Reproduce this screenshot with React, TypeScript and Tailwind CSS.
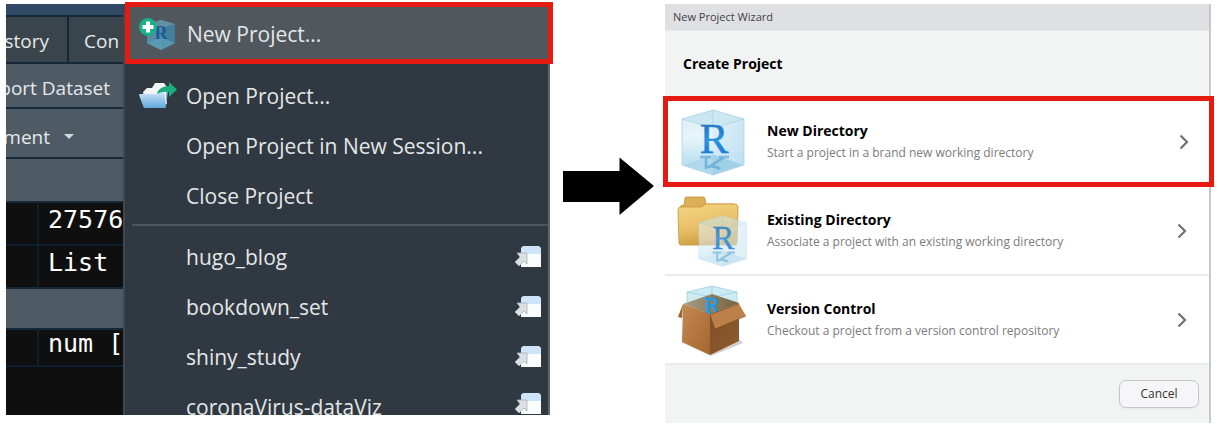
import type { ReactNode } from "react";

function Cube({ id }: { id: string }) {
  return (
    <g>
      <defs>
        <linearGradient id={`${id}-left`} x1="0" y1="0" x2="0" y2="1">
          <stop offset="0" stopColor="#cdeaf3" />
          <stop offset="0.5" stopColor="#e3f3f9" />
          <stop offset="1" stopColor="#aad8ed" />
        </linearGradient>
        <linearGradient id={`${id}-right`} x1="0" y1="0" x2="1" y2="1">
          <stop offset="0" stopColor="#e4f3fb" />
          <stop offset="1" stopColor="#bfdff1" />
        </linearGradient>
        <linearGradient id={`${id}-letter`} x1="0" y1="0" x2="0" y2="1">
          <stop offset="0" stopColor="#1b66b4" />
          <stop offset="0.55" stopColor="#2793e4" />
          <stop offset="1" stopColor="#0c6fd0" />
        </linearGradient>
      </defs>
      <path d="M1 10 32 1v44L1 56Z" fill={`url(#${id}-left)`} />
      <path d="M32 1l31 9v46L32 45Z" fill={`url(#${id}-right)`} />
      <path d="M1 56 32 45l31 11-31 10Z" fill="#9fd0e8" />
      <path d="M1 10 32 1l31 9-31 9Z" fill="#c5e6ef" fillOpacity="0.7" />
      <path d="M32 19v47L1 56V10Z" fill="#fff" fillOpacity="0.18" />
      <path d="M1 10 32 1l31 9v46L32 66 1 56ZM1 10l31 9 31-9M32 1v18" fill="none" stroke="#a9d3e2" strokeWidth="0.8" />
    </g>
  );
}

function Letter({ id }: { id: string }) {
  return (
    <>
      <text x="33" y="44" textAnchor="middle" fontSize="43" className="font-['Liberation_Serif',serif]" fill={`url(#${id}-letter)`} stroke={`url(#${id}-letter)`} strokeWidth="0.5">R</text>
      <path d="M19 48h11M38 48h10M25 48v12M29 57 43 48.500M26 58q8-2 13 2" fill="none" stroke="#4f9fd0" strokeWidth="2.6" opacity="0.6" />
    </>
  );
}

function NewDirectoryIcon() {
  return (
    <svg viewBox="0 0 64 67" className="h-[67px] w-[64px]" aria-hidden="true">
      <Cube id="nd" />
      <Letter id="nd" />
    </svg>
  );
}

function FolderIcon() {
  return (
    <svg viewBox="0 0 72 72" className="h-[72px] w-[72px]" aria-hidden="true">
      <defs>
        <linearGradient id="folder" x1="0" y1="0" x2="0.3" y2="1">
          <stop offset="0" stopColor="#f5d585" />
          <stop offset="0.6" stopColor="#e8c068" />
          <stop offset="1" stopColor="#cfa046" />
        </linearGradient>
      </defs>
      <path d="M7 9 8 2q0-1 2-1h16q2 0 2 2l1 5h28q3 0 3 3v8H3v-7q0-3 4-3Z" fill="#dcae55" stroke="#c1933e" strokeWidth="0.8" />
      <path d="M1 14q0-3 3-3h20l5-3h28q4 0 4 3l-1 36q0 2-2 2H4q-2 0-2-2Z" fill="url(#folder)" stroke="#c99b45" strokeWidth="0.9" />
      <g transform="translate(21 19) scale(.77 .78)" opacity="0.55">
        <Cube id="fd" />
      </g>
      <g transform="translate(21 19) scale(.77 .78)" opacity="0.85">
        <Letter id="fd" />
      </g>
    </svg>
  );
}

function BoxIcon() {
  return (
    <svg viewBox="0 0 70 72" className="h-[72px] w-[70px]" aria-hidden="true">
      <defs>
        <linearGradient id="box-left" x1="0" y1="0" x2="1" y2="1">
          <stop offset="0" stopColor="#c48a50" />
          <stop offset="1" stopColor="#a4662f" />
        </linearGradient>
        <linearGradient id="box-right" x1="0" y1="0" x2="1" y2="1">
          <stop offset="0" stopColor="#7f4f26" />
          <stop offset="1" stopColor="#8f5b2e" />
        </linearGradient>
        <linearGradient id="box-inside" x1="0" y1="0" x2="1" y2="0">
          <stop offset="0" stopColor="#a99e84" />
          <stop offset="1" stopColor="#75603f" />
        </linearGradient>
      </defs>
      <path d="M3 57l30 14 32-13-5-5Z" fill="#777" opacity="0.35" />
      <path d="M9 7 34 1l25 6v15L33 29 9 20Z" fill="#cdebf3" stroke="#9ed0df" strokeWidth="0.8" />
      <path d="M9 7l25 5 25-5M34 1v11" fill="none" stroke="#9ed0df" strokeWidth="0.8" />
      <path d="M5 19 34 9l27 9-29 11Z" fill="url(#box-inside)" />
      <text x="34" y="28" textAnchor="middle" fontSize="24" className="font-['Liberation_Serif',serif]" fill="#1f9be6" stroke="#1f9be6" strokeWidth="1">R</text>
      <path d="M5 19 32 29v41L4 57Z" fill="url(#box-left)" />
      <path d="M32 29 61 18v38L32 70Z" fill="url(#box-right)" />
      <path d="M5 19 0 32l4 1Z" fill="#9c6331" />
      <path d="M32 30l5 14 31-13-7-12Z" fill="#bb8148" />
      <path d="M32 30l5 14 31-13" fill="none" stroke="#6d4320" strokeOpacity="0.5" strokeWidth="0.9" />
    </svg>
  );
}

function NewProjectIcon() {
  return (
    <svg viewBox="0 0 36 34" className="h-[34px] w-[36px]" aria-hidden="true">
      <path d="M8 7 22 3l14 4v19l-14 7L8 26Z" fill="#568ba0" />
      <path d="M22 11l14-4v19l-14 7Z" fill="#437f9c" />
      <path d="M8 7 22 3l14 4-14 4Z" fill="#64909f" />
      <path d="M8 26l14-6 14 6-14 7Z" fill="#62a5c0" fillOpacity="0.6" />
      <text x="22" y="22" textAnchor="middle" fontSize="18" className="font-['Liberation_Serif',serif] font-bold" fill="#1c5a9b">R</text>
      <circle cx="9" cy="10" r="9" fill="#19b287" />
      <path d="M9 4.500v11M3.500 10h11" stroke="#fff" strokeWidth="4" />
    </svg>
  );
}

function OpenProjectIcon() {
  return (
    <svg viewBox="0 0 38 28" className="h-[28px] w-[38px]" aria-hidden="true">
      <defs>
        <linearGradient id="open-front" x1="0" y1="0" x2="0" y2="1">
          <stop offset="0" stopColor="#cfe5f7" />
          <stop offset="1" stopColor="#5fa8dc" />
        </linearGradient>
      </defs>
      <path d="M4 10 8 6h5l3-5h9l3 4v17H6Z" fill="#f3f5f7" />
      <path d="M27 8l2 1-2 16Z" fill="#7fb6dd" />
      <path d="M0 13q0-1 1-1h17l3-2h3q1 0 1.500 1L27 25q0 1-1 1H6q-1 0-1.500-1Z" fill="url(#open-front)" />
      <path d="M18 12q2-8 12-8V0l8 7.500L30 15v-5q-7-1-12 2Z" fill="#19ad80" />
    </svg>
  );
}

function SessionIcon() {
  return (
    <svg viewBox="0 0 28 22" className="h-[22px] w-[28px] shrink-0" aria-hidden="true">
      <path d="M7 4q0-4 4-4h12q4 0 4 4v17H7Z" fill="#fafcfe" />
      <path d="M7 8V4q0-4 4-4h12q4 0 4 4v4Z" fill="#cde4fb" />
      <path d="M3 7h10v11l-3-3-5 5-4-4 5-5Z" fill="#dcdfe3" stroke="#a9afb6" strokeWidth="0.8" />
    </svg>
  );
}

function Chevron() {
  return (
    <svg viewBox="0 0 10 16" className="h-[16px] w-[10px] shrink-0" fill="none" stroke="#717171" strokeWidth="2.2" aria-hidden="true">
      <path d="M1.500 1.500 8 8l-6.500 6.500" />
    </svg>
  );
}

const recent = ["hugo_blog", "bookdown_set", "shiny_study"];

const dataCell = "border-l-2 border-[#0e2030] pb-[7px] pl-[9px]";

function EnvironmentPane() {
  return (
    <div className="flex w-[117px] shrink-0 flex-col overflow-hidden bg-[#0f0f0f] text-[19px] leading-6 whitespace-nowrap text-[#e6e8ea]">
      <div className="h-[11px] shrink-0 bg-[#304a66]" />
      <div className="flex h-[49px] shrink-0 border-y-2 border-[#142838] bg-[#3a444b]">
        <button type="button" aria-label="History" className="flex w-[63px] shrink-0 items-center justify-end border-r-2 border-[#142838] pt-[3px] pr-[18px]">story</button>
        <button type="button" aria-label="Connections" className="flex flex-1 items-center pt-[3px] pl-[15px]">Con</button>
      </div>
      <div className="flex h-[45px] shrink-0 items-center justify-end border-b-2 border-[#142838] bg-[#4e5b65] pt-[5px] pr-[13px]">
        <button type="button" aria-label="Import Dataset">port Dataset</button>
      </div>
      <div className="flex h-[50px] shrink-0 items-center border-b-2 border-[#142838] bg-[#4e5b65] pt-[7px]">
        <button type="button" aria-label="Environment" className="flex w-[68px] shrink-0 items-center justify-end gap-[14px]">
          ment
          <svg viewBox="0 0 10 5" className="h-[5px] w-[10px] shrink-0" aria-hidden="true"><path d="M0 0h10L5 5Z" fill="#d5d8da" /></svg>
        </button>
      </div>
      <table className="w-full table-fixed border-collapse font-['DejaVu_Sans_Mono',monospace] text-[25px] text-white">
        <colgroup><col className="w-[32px]" /><col /></colgroup>
        <tbody>
          <tr className="h-[43px] border-b-2 border-[#142838] bg-[#4e5b65]"><td colSpan={2} /></tr>
          <tr className="h-[43px] border-b-2 border-[#0e2030]"><td /><td className={dataCell}>27576</td></tr>
          <tr className="h-[43px] border-b-2 border-[#142838]"><td /><td className={dataCell}>List</td></tr>
          <tr className="h-[41px] border-b-2 border-[#142838] bg-[#4e5b65]"><td colSpan={2} /></tr>
          <tr className="h-[37px] border-b-2 border-[#0e2030]"><td /><td className={dataCell}>num [</td></tr>
        </tbody>
      </table>
    </div>
  );
}

const menuRow = "flex h-[50px] w-full items-center pl-[61px] text-left";

function ProjectMenu() {
  return (
    <div className="min-w-0 flex-1 border-x-2 border-l-[#3d4850] border-r-[#5d676f] bg-[#303941] text-[21px] leading-7 text-[#e4e6e8]">
      <div className="-mt-[2px] -mr-[5px]">
        <button type="button" className="flex h-[62px] w-full items-center gap-[12px] border-[5px] border-[#e71a12] bg-[#50575d] pt-[2px] pl-[9px] text-left">
          <NewProjectIcon />
          New Project...
        </button>
      </div>
      <button type="button" className="mt-[7px] flex h-[50px] w-full items-center gap-[9px] pl-[14px] text-left">
        <OpenProjectIcon />
        Open Project...
      </button>
      <button type="button" className={menuRow}>Open Project in New Session...</button>
      <button type="button" className={menuRow}>Close Project</button>
      <hr className="mt-[3px] mb-[6px] ml-[7px] border-t-2 border-[#4b5760]" />
      {recent.map((name) => (
        <button key={name} type="button" className="flex h-[50px] w-full items-center justify-between pr-[6px] pl-[61px] text-left">
          {name}
          <SessionIcon />
        </button>
      ))}
      <button type="button" className="flex h-[33px] w-full items-start justify-between overflow-hidden pt-[11px] pr-[6px] pl-[61px] text-left">
        coronaVirus-dataViz
        <SessionIcon />
      </button>
    </div>
  );
}

function OptionBody({ icon, title, text }: { icon: ReactNode; title: string; text: string }) {
  return (
    <>
      <span className="flex w-[102px] shrink-0 justify-center pt-[2px] pr-[6px]">{icon}</span>
      <span className="flex min-w-0 flex-1 flex-col">
        <span className="text-[14px] leading-[22px] font-bold text-black">{title}</span>
        <span className="text-[12px] leading-[22px] text-[#7b7b7b]">{text}</span>
      </span>
      <Chevron />
    </>
  );
}

function Option(props: { icon: ReactNode; title: string; text: string }) {
  return (
    <button type="button" className="flex h-[89px] w-full items-center border-b-2 border-[#e9ebea] bg-white pr-[22px] text-left">
      <OptionBody {...props} />
    </button>
  );
}

function Wizard() {
  return (
    <section className="min-w-0 flex-1 self-start border-r-2 border-[#c6c8c9] bg-[#f2f4f3]">
      <div className="flex h-[27px] items-center border-b border-[#e8e9eb] bg-[#dfe0e4] pl-[8px] text-[11px] text-[#3f4043]">New Project Wizard</div>
      <h1 className="flex h-[65px] items-center pl-[18px] text-[14px] font-bold text-black">Create Project</h1>
      <div className="-mr-[5px] -ml-[2px]">
        <button type="button" className="flex h-[91px] w-full items-center border-[5px] border-[#e71a12] bg-white pr-[20px] text-left">
          <span className="-ml-[3px] flex min-w-0 flex-1 items-center">
            <OptionBody icon={<NewDirectoryIcon />} title="New Directory" text="Start a project in a brand new working directory" />
          </span>
        </button>
      </div>
      <Option icon={<FolderIcon />} title="Existing Directory" text="Associate a project with an existing working directory" />
      <Option icon={<BoxIcon />} title="Version Control" text="Checkout a project from a version control repository" />
      <div className="flex h-[58px] items-center justify-end pr-[10px]">
        <button type="button" className="h-[28px] w-[80px] rounded-[7px] border border-[#c5c6c9] bg-[#f6f6f8] text-[12px] text-[#333] shadow-xs">Cancel</button>
      </div>
    </section>
  );
}

export default function App() {
  return (
    <main className="flex min-h-screen items-start bg-white pt-[4px] pr-[8px] pl-[6px] font-['Open_Sans','Noto_Sans',sans-serif]">
      <div className="flex min-w-0 flex-1">
        <EnvironmentPane />
        <ProjectMenu />
      </div>
      <div className="flex w-[115px] shrink-0 pt-[153px] pl-[13px]">
        <svg viewBox="0 0 92 60" className="h-[60px] w-[92px]" role="img" aria-label="Then">
          <path d="M0 14h56.500V.5L91 29 56.500 58V45H0Z" fill="#000" />
        </svg>
      </div>
      <Wizard />
    </main>
  );
}
